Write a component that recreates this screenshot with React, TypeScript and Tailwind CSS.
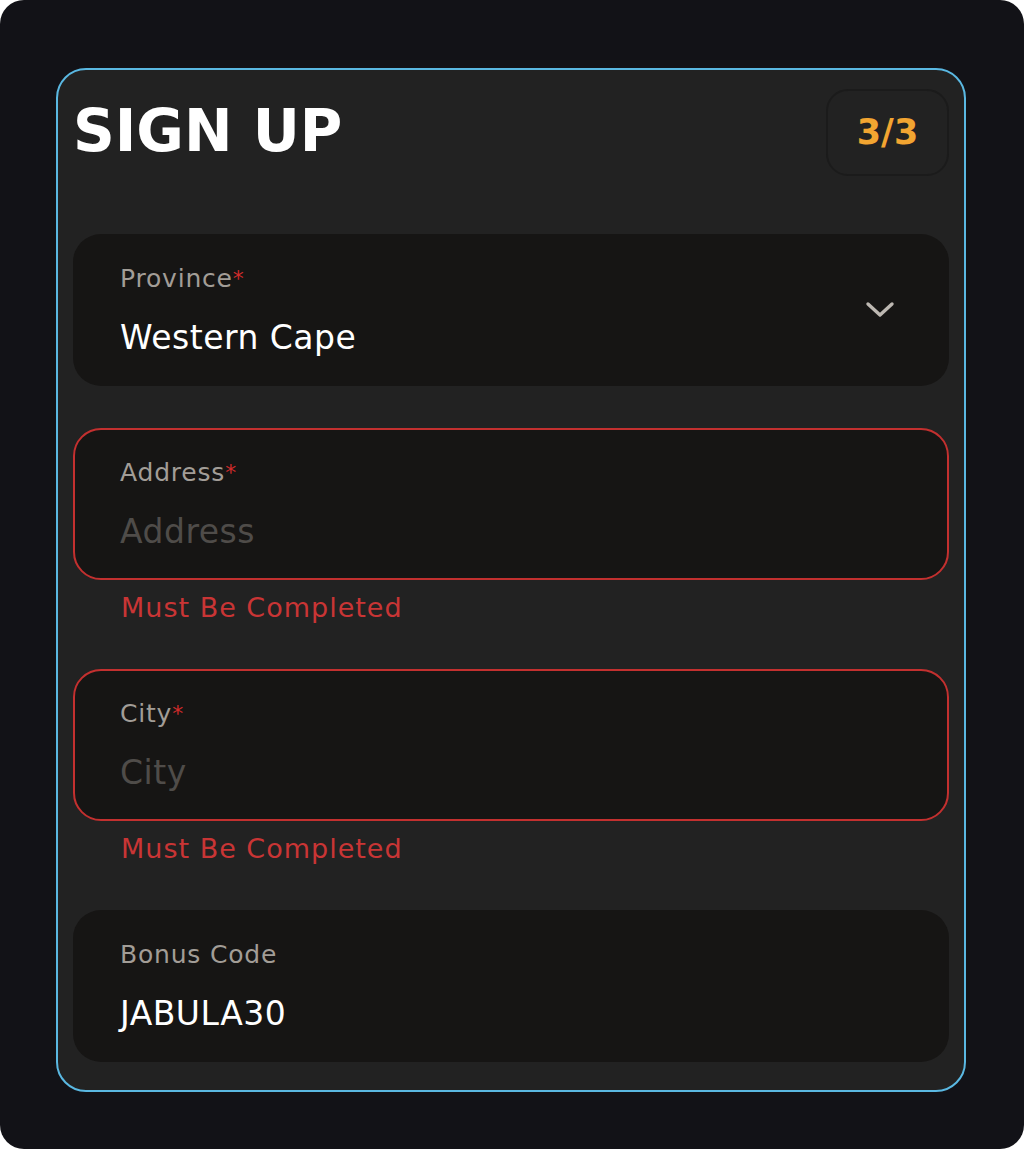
const font = { fontFamily: '"DejaVu Sans", "Open Sans", sans-serif' };

function Chevron() {
  return (
    <svg width="30" height="18" viewBox="0 0 30 18" fill="none" className="text-[#bdb8b2]">
      <path d="M3 3 L15 14 L27 3" stroke="currentColor" strokeWidth="3.4" strokeLinecap="round" strokeLinejoin="round" />
    </svg>
  );
}

function Field({
  label,
  required,
  value,
  placeholder,
  error,
  select,
}: {
  label: string;
  required?: boolean;
  value?: string;
  placeholder?: string;
  error?: boolean;
  select?: boolean;
}) {
  return (
    <div className="flex flex-col">
      <div
        className={`h-[152px] rounded-[28px] bg-[#161514] flex items-center justify-between pl-[45px] pr-[52px] ${
          error ? "border-2 border-[#c3302f]" : "border-2 border-transparent"
        }`}
      >
        <div className="flex flex-col">
          <span className="text-[25px] leading-[30px] text-[#a29d97] tracking-[0.8px]">
            {label}
            {required && <span className="text-[#d02b2b] text-[22px] align-top">*</span>}
          </span>
          <span
            className={`mt-[26px] text-[33px] leading-[36px] tracking-[0.5px] ${
              value ? "text-white" : "text-[#4f4c49]"
            }`}
          >
            {value || placeholder}
          </span>
        </div>
        {select && <Chevron />}
      </div>
      {error && (
        <div className="h-[47px] pt-[13px] pl-[48px] text-[27px] leading-[30px] tracking-[1px] text-[#c93535]">
          Must Be Completed
        </div>
      )}
    </div>
  );
}

export default function App() {
  return (
    <div className="w-[1024px] h-[1149px] bg-white" style={font}>
      <div className="w-full h-full rounded-[24px] bg-[#121217] pt-[68px] px-[56px]">
        <div className="w-[910px] h-[1024px] rounded-[30px] border-2 border-[#5ab8e2] bg-[#222222] px-[15px] pt-[19px]">
          <div className="flex items-start justify-between h-[145px]">
            <h1 className="mt-[10px] text-[58px] leading-[64px] font-bold text-white">
              SIGN UP
            </h1>
            <div className="w-[123px] h-[87px] rounded-[22px] border-2 border-[#1b1b1b] flex items-center justify-center text-[35px] font-bold text-[#f2a531]">
              3/3
            </div>
          </div>
          <div className="flex flex-col gap-[42px]">
            <Field label="Province" required value="Western Cape" select />
            <Field label="Address" required placeholder="Address" error />
            <Field label="City" required placeholder="City" error />
            <Field label="Bonus Code" value="JABULA30" />
          </div>
        </div>
      </div>
    </div>
  );
}
